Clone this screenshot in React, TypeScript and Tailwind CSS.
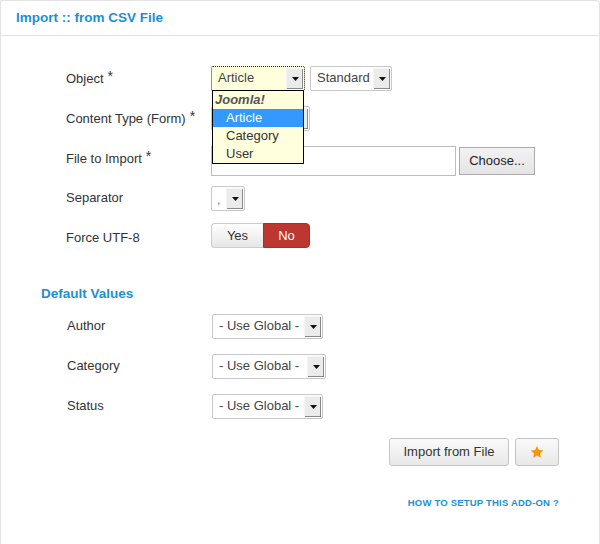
import React from "react";

const font = "font-['Liberation_Sans',Arial,sans-serif]";

function Arrow() {
  return (
    <div className="w-[17px] self-stretch flex items-center justify-center bg-[#ebebeb] border-l border-t border-l-[#f4f4f4] border-t-[#f4f4f4] shadow-[inset_-1px_-1px_0_#8a8a8a]">
      <svg width="7" height="4" viewBox="0 0 7 4">
        <path d="M0 0h7L3.5 4z" fill="#111" />
      </svg>
    </div>
  );
}

function Select({ value, w, focus = false }: { value: string; w: number; focus?: boolean }) {
  return (
    <div
      style={{ width: w }}
      className={`h-[25px] flex items-stretch rounded-[2px] text-[13px] ${
        focus
          ? "bg-[#ffffde] border border-dotted border-[#222]"
          : "bg-white border border-[#c8c8c8]"
      }`}
    >
      <div className="flex-1 flex items-center pl-[6px] text-[#444] whitespace-nowrap overflow-hidden">{value}</div>
      <div className="p-[1px] flex">
        <Arrow />
      </div>
    </div>
  );
}

function Row({ label, req, children }: { label: string; req?: boolean; children: React.ReactNode }) {
  return (
    <div className="h-[40px] flex items-center">
      <div className="w-[145px] text-[13px] text-[#333]">
        {label}
        {req && <span className="ml-[4px] text-[14px] text-[#333] relative -top-[2px]">*</span>}
      </div>
      <div className="flex items-center gap-[5px]">{children}</div>
    </div>
  );
}

export default function App() {
  return (
    <div className={`${font} w-[600px] h-[544px] bg-white`}>
      <div className="h-[560px] border border-[#e2e2e2] rounded-tr-[4px]">
        {/* header */}
        <div className="h-[35px] border-b border-[#e3e3e3] flex items-center px-[15px]">
          <span className="text-[13.5px] font-bold text-[#1b8fd4]">Import :: from CSV File</span>
        </div>

        {/* form */}
        <div className="pt-[22px] pl-[65px]">
          <Row label="Object" req>
            <div className="relative">
              <Select value="Article" w={94} focus />
              <div className="absolute left-[1px] top-[24px] w-[92px] z-10 bg-[#ffffde] border border-black text-[13px] text-[#333]">
                <div className="h-[18px] flex items-center pl-[2px] font-bold italic text-[#555]">Joomla!</div>
                <div className="h-[18px] flex items-center pl-[13px] bg-[#3399ff] text-white">Article</div>
                <div className="h-[18px] flex items-center pl-[13px]">Category</div>
                <div className="h-[18px] flex items-center pl-[13px]">User</div>
              </div>
            </div>
            <Select value="Standard" w={82} />
          </Row>
          <Row label="Content Type (Form)" req>
            <Select value="" w={99} />
          </Row>
          <Row label="File to Import" req>
            <div className="flex items-center gap-[3px] mt-[6px]">
              <div className="w-[245px] h-[30px] border border-[#bdbdbd] bg-white" />
              <button className="w-[76px] h-[28px] border border-[#ababab] bg-[linear-gradient(#f2f2f2,#e4e4e4)] text-[13px] text-[#222]">
                Choose...
              </button>
            </div>
          </Row>
          <Row label="Separator">
            <div className="w-[34px] h-[25px] flex items-stretch rounded-[2px] border border-[#c8c8c8] bg-white text-[12px]">
              <div className="flex-1 flex items-center pl-[5px] pt-[3px] text-[#4a80c0]">,</div>
              <div className="p-[1px] flex">
                <Arrow />
              </div>
            </div>
          </Row>
          <Row label="Force UTF-8">
            <div className="flex h-[25px] -mt-[5px] text-[13px]">
              <div className="w-[52px] flex items-center justify-center border border-[#ccc] border-r-0 rounded-l-[4px] bg-[linear-gradient(#ffffff,#e6e6e6)] text-[#333]">
                Yes
              </div>
              <div className="w-[47px] flex items-center justify-center rounded-r-[4px] bg-[#bd362f] text-white border border-[#a9302a]">
                No
              </div>
            </div>
          </Row>
        </div>

        <div className="mt-[28px] pl-[40px] h-[16px] flex items-center">
          <span className="text-[13.5px] font-bold text-[#1b8fd4]">Default Values</span>
        </div>

        <div className="pt-[4px] pl-[66px]">
          <Row label="Author">
            <Select value="- Use Global -" w={111} />
          </Row>
          <Row label="Category">
            <Select value="- Use Global -" w={114} />
          </Row>
          <Row label="Status">
            <Select value="- Use Global -" w={111} />
          </Row>
        </div>

        <div className="mt-[12px] flex justify-end gap-[6px] pr-[40px]">
          <button className="w-[120px] h-[28px] rounded-[3px] border border-[#c4c4c4] bg-[linear-gradient(#fafafa,#e8e8e8)] text-[13px] text-[#333]">
            Import from File
          </button>
          <button className="w-[44px] h-[28px] rounded-[3px] border border-[#c4c4c4] bg-[linear-gradient(#fafafa,#e8e8e8)] flex items-center justify-center">
            <svg width="14" height="14" viewBox="0 0 24 24">
              <path d="M12 1.5l3.2 7 7.6.8-5.7 5.2 1.6 7.5L12 18.2 5.3 22l1.6-7.5L1.2 9.3l7.6-.8z" fill="#f89406" />
            </svg>
          </button>
        </div>

        <div className="mt-[30px] flex justify-end pr-[40px]">
          <span className="text-[9.5px] font-bold text-[#1b8fd4] tracking-[0.2px]">HOW TO SETUP THIS ADD-ON ?</span>
        </div>
      </div>
    </div>
  );
}
